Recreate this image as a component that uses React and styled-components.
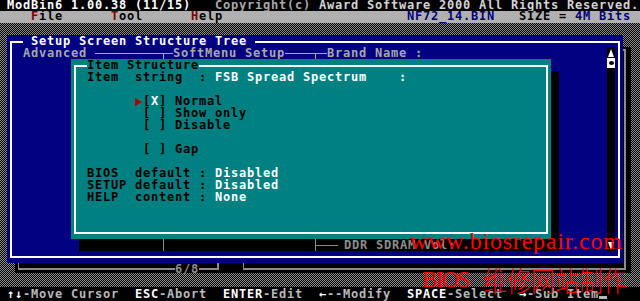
import React from 'react'
import styled, { createGlobalStyle } from 'styled-components'

const GlobalStyle = createGlobalStyle`
  html, body { margin: 0; padding: 0; background: #000; }
  body { overflow: hidden; }
`

const NAVY = '#000080'
const TEAL = '#008080'
const LIGHT = '#a8a8a8'
const DIM = '#8c8c8c'

const Screen = styled.div`
  position: relative;
  width: 640px;
  height: 301px;
  overflow: hidden;
  display: flex;
  flex-direction: column;
  background: #000;
  font-family: "DejaVu Sans Mono", "Liberation Mono", monospace;
  font-weight: bold;
  font-size: 12px;
  line-height: 12px;
  letter-spacing: 0.775px;
  white-space: pre;
`

const TopBar = styled.div`
  flex: none;
  height: 11px;
  line-height: 11px;
  display: flex;
  justify-content: space-between;
  padding: 0 1px 0 7px;
  color: #fff;
`
const Tone = styled.span`
  color: ${p => p.$c};
`

const MenuBar = styled.div`
  position: relative;
  z-index: 1;
  flex: none;
  height: 12px;
  line-height: 11px;
  display: flex;
  gap: 48px;
  padding: 0 9px 0 31px;
  background: #b0b0b0;
  color: #000;
`
const MenuItem = styled.span``
const Hot = styled.span`
  color: #800000;
`
const FileInfo = styled.span`
  margin-left: auto;
`

const Desktop = styled.div`
  position: relative;
  flex: 1;
  background: repeating-conic-gradient(${DIM} 0% 25%, #000 0% 50%) 0 0 / 2px 2px;
`

/* window behind, mostly hidden */
const BackFrame = styled.div`
  position: absolute;
  left: 15px;
  top: 24px;
  width: 616px;
  height: 226px;
  box-sizing: border-box;
  padding: 2px 5px 0 3px;
  display: flex;
  flex-direction: column;
  background: #000;
  color: ${DIM};
`
const BackBox = styled.div`
  flex: 1;
  border: solid currentColor;
  border-width: 2px 2px 0 1px;
`
const BackBottom = styled.div`
  height: 10px;
  display: flex;
`
const Seg = styled.span`
  position: relative;
  flex: ${p => (p.$w ? 'none' : '1')};
  width: ${p => p.$w || 0}px;
  &::before {
    content: '';
    position: absolute;
    left: 0;
    right: 0;
    top: 5px;
    height: 2px;
    background: currentColor;
  }
  &::after {
    content: '';
    position: absolute;
    top: 0;
    height: 7px;
    left: ${p => (p.$up === 'left' ? '0' : 'auto')};
    right: ${p => (p.$up === 'right' ? '0' : 'auto')};
    width: ${p => (p.$up === 'left' ? 1 : 2)}px;
    background: currentColor;
    display: ${p => (p.$up ? 'block' : 'none')};
  }
`
const PageLabel = styled.span`
  flex: none;
  width: 24px;
  height: 10px;
  line-height: 12px;
`
const SegGap = styled.span`
  flex: none;
  width: 24px;
`

const BlueWindow = styled.div`
  position: absolute;
  left: 7px;
  top: 12px;
  width: 616px;
  height: 228px;
  box-sizing: border-box;
  padding: 6px 3px 5px 3px;
  display: flex;
  background: ${NAVY};
`
const Frame = styled.div`
  position: relative;
  flex: 1;
  display: flex;
  border: 2px solid #fff;
  padding: 4px 3px 5px 11px;
`
const FrameTitle = styled.div`
  position: absolute;
  top: -8px;
  left: 11px;
  height: 12px;
  background: ${p => p.$bg};
  color: ${p => p.$fg};
`
const TreePane = styled.div`
  flex: 1;
  display: flex;
  flex-direction: column;
  justify-content: space-between;
  color: ${LIGHT};
`
const TreeRow = styled.div`
  height: 12px;
  display: flex;
`
const HRule = styled.span`
  position: relative;
  flex: none;
  width: ${p => p.$w}px;
  margin-left: ${p => p.$lead || 0}px;
  &::before {
    content: '';
    position: absolute;
    left: 0;
    right: 0;
    top: 6px;
    height: 1px;
    background: currentColor;
  }
  &::after {
    content: '';
    position: absolute;
    left: ${p => p.$tick}px;
    top: 6px;
    bottom: 0;
    width: 1px;
    background: currentColor;
  }
`
const ShadowRow = styled(TreeRow)`
  position: relative;
  z-index: 3;
  color: ${DIM};
`
const VRule = styled.span`
  flex: none;
  width: 1px;
  margin-left: ${p => p.$at}px;
  background: currentColor;
`
const Branch = styled.span`
  position: relative;
  flex: none;
  width: ${p => p.$w}px;
  margin-left: ${p => p.$at}px;
  border-left: 1px solid currentColor;
  margin-right: 6px;
  &::before {
    content: '';
    position: absolute;
    left: 0;
    right: 0;
    top: 6px;
    height: 1px;
    background: currentColor;
  }
`

const ScrollBar = styled.div`
  flex: none;
  width: 8px;
  display: flex;
  flex-direction: column;
  background: #000;
`
const Thumb = styled.div`
  height: 10px;
  background: #fff;
  display: flex;
  align-items: center;
  justify-content: center;
  &::before {
    content: '';
    width: 5px;
    height: 4px;
    border-radius: 50%;
    background: #000;
  }
`
const Track = styled.div`
  flex: 1;
`

const Dialog = styled.div`
  position: absolute;
  left: 71px;
  top: 36px;
  z-index: 2;
  width: 480px;
  height: 180px;
  box-sizing: border-box;
  padding: 6px 3px 5px 3px;
  display: flex;
  background: ${TEAL};
  box-shadow: 8px 12px 0 #000;
`
const DialogFrame = styled(Frame)`
  flex-direction: column;
  padding: 4px 0 0 11px;
  color: #000;
`
const Row = styled.div`
  height: 12px;
`
const Value = styled.span`
  color: #fff;
`
const Marker = styled.span`
  position: relative;
  display: inline-block;
  width: 8px;
  height: 12px;
  vertical-align: top;
  &::before {
    content: '';
    position: absolute;
    left: 0;
    top: 3px;
    border-left: 7px solid #a80000;
    border-top: 4px solid transparent;
    border-bottom: 4px solid transparent;
  }
`

const StatusBar = styled.div`
  flex: none;
  height: 14px;
  box-sizing: border-box;
  padding: 1px 0 0 7px;
  color: #b8b8b8;
`
const Key = styled.span`
  color: #fff;
`
const Cursor = styled.span`
  display: inline-block;
  width: 8px;
  height: 11px;
  box-sizing: border-box;
  border-bottom: 3px solid #b8b8b8;
  vertical-align: top;
`

const Watermark = styled.div`
  position: absolute;
  left: 410px;
  top: 229px;
  z-index: 10;
  display: flex;
  flex-direction: column;
  gap: 17px;
  pointer-events: none;
  color: #f00;
  font-family: "Liberation Serif", serif;
  font-weight: normal;
  font-size: 24px;
  line-height: 24px;
  letter-spacing: 0.8px;
`
const MarkLine = styled.div`
  height: 24px;
  display: flex;
  align-items: flex-start;
  padding-left: ${p => p.$indent || 0}px;
`
const MarkLatin = styled.span`
  flex: none;
  width: 61px;
  margin-top: -3px;
  letter-spacing: -2px;
`
const MarkCjk = styled.span`
  display: inline-block;
  font-family: "Noto Sans CJK SC", sans-serif;
  font-weight: 300;
  letter-spacing: 0;
  transform: scaleY(1.2);
  transform-origin: 50% 100%;
`

const options = [
  { label: 'Normal', on: true },
  { label: 'Show only' },
  { label: 'Disable' },
  null,
  { label: 'Gap' },
]

const defaults = [
  ['BIOS  default : ', 'Disabled'],
  ['SETUP default : ', 'Disabled'],
  ['HELP  content : ', 'None'],
]

const Arrow = ({ down }) => (
  <svg width="8" height="11" viewBox="0 0 8 11">
    <polygon points={down ? '1,2 7,2 4,10' : '4,2 7,10 1,10'} fill="#fff" />
  </svg>
)

export default function App() {
  return (
    <>
      <GlobalStyle />
      <Screen>
        <TopBar>
          <span>ModBin6 1.00.38 (11/15)</span>
          <span>
            <Tone $c="#a8a8a8">Copyright(c) </Tone>
            <Tone $c="#d4d4d4">Award Software 2000 All Rights Reserved.</Tone>
          </span>
        </TopBar>

        <MenuBar>
          {['File', 'Tool', 'Help'].map(m => (
            <MenuItem key={m}>
              <Hot>{m[0]}</Hot>
              {m.slice(1)}
            </MenuItem>
          ))}
          <FileInfo>
            <Tone $c={NAVY}>NF72_14.BIN</Tone>
            {'   SIZE = '}
            <Tone $c={NAVY}>4M Bits</Tone>
          </FileInfo>
        </MenuBar>

        <Desktop>
          <BackFrame>
            <BackBox />
            <BackBottom>
              <Seg $w={157} $up="left" />
              <PageLabel>6/8</PageLabel>
              <Seg $w={20} $up="right" />
              <SegGap />
              <Seg $up="left" />
              <Seg $w={2} $up="right" />
            </BackBottom>
          </BackFrame>

          <BlueWindow>
            <Frame>
              <FrameTitle $bg={NAVY} $fg="#fff">{' Setup Screen Structure Tree '}</FrameTitle>
              <TreePane>
                <TreeRow>
                  <span>Advanced</span>
                  <HRule $w={78} $lead={8} $tick={68} />
                  <span>SoftMenu Setup</span>
                  <HRule $w={42} $tick={30} />
                  <span>Brand Name :</span>
                </TreeRow>
                <ShadowRow>
                  <VRule $at={140} />
                  <Branch $at={151} $w={22} />
                  <span>DDR SDRAM Vol:</span>
                </ShadowRow>
              </TreePane>
              <ScrollBar>
                <Arrow />
                <Thumb />
                <Track />
                <Arrow down />
              </ScrollBar>
            </Frame>
          </BlueWindow>

          <Dialog>
            <DialogFrame>
              <FrameTitle $bg={TEAL} $fg="#000">Item Structure</FrameTitle>
              <Row>
                {'Item  string  : '}
                <Value>{'FSB Spread Spectrum    :'}</Value>
              </Row>
              <Row />
              {options.map((o, i) =>
                o ? (
                  <Row key={i}>
                    {'      '}
                    {o.on ? <Marker /> : ' '}
                    [<Value>{o.on ? 'X' : ' '}</Value>] {o.label}
                  </Row>
                ) : (
                  <Row key={i} />
                )
              )}
              <Row />
              {defaults.map(([k, v]) => (
                <Row key={k}>
                  {k}
                  <Value>{v}</Value>
                </Row>
              ))}
            </DialogFrame>
          </Dialog>
        </Desktop>

        <StatusBar>
          <Key>↑↓</Key>-Move Cursor{'  '}
          <Key>ESC</Key>-Abort{'  '}
          <Key>ENTER</Key>-Edit{'  '}
          <Key>←</Key>--Modify{'  '}
          <Key>SPACE</Key>-Select{'  '}
          <Key>→</Key>-Sub Item
          <Cursor />
        </StatusBar>

        <Watermark>
          <MarkLine>www.biosrepair.com</MarkLine>
          <MarkLine $indent={12}>
            <MarkLatin>BIOS</MarkLatin>
            <MarkCjk>维修网站制作</MarkCjk>
          </MarkLine>
        </Watermark>
      </Screen>
    </>
  )
}
